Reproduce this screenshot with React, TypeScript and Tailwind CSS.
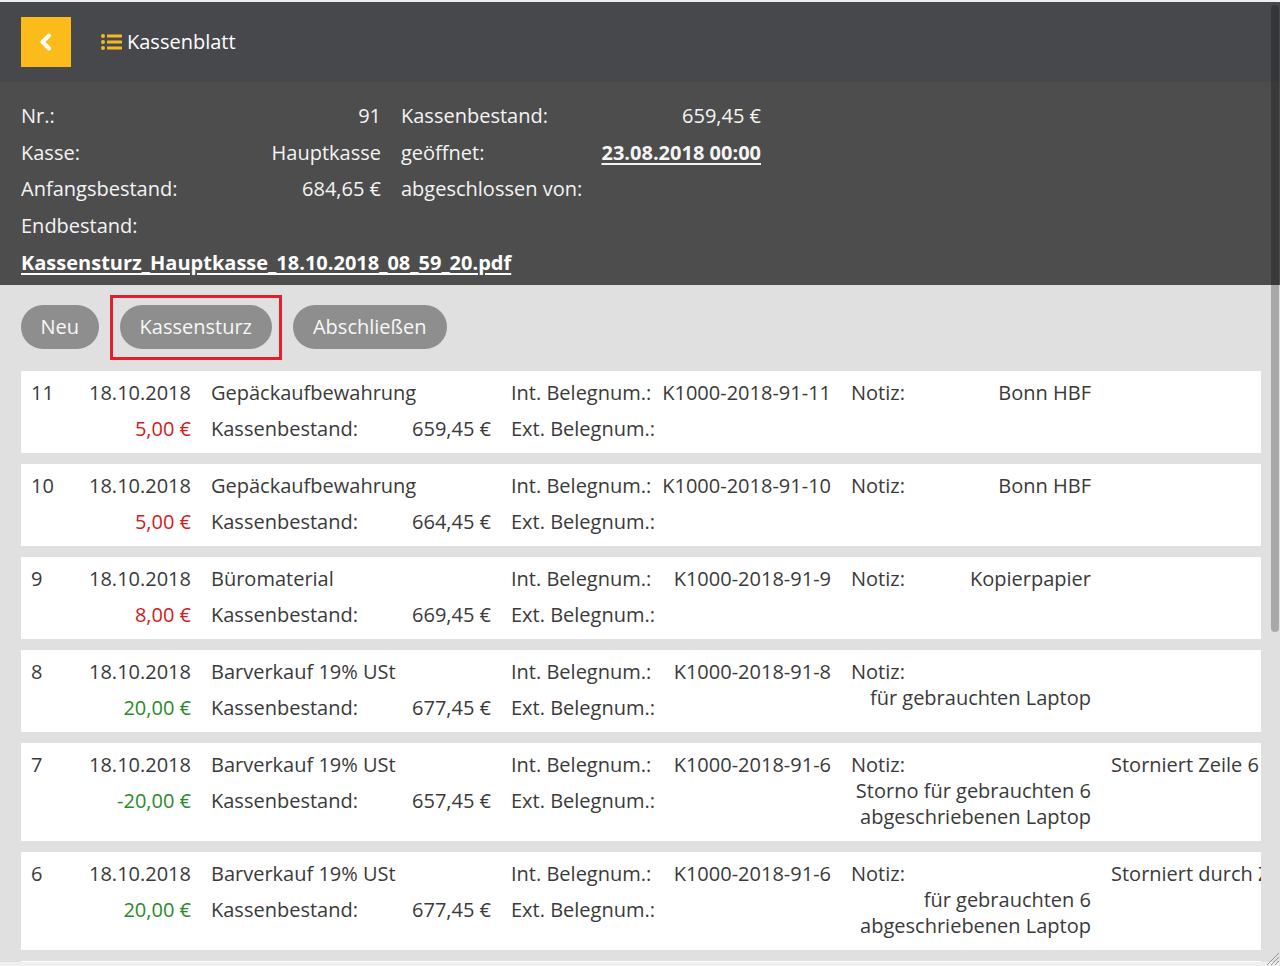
import React from "react";

type Row = {
  nr: string;
  date: string;
  desc: string;
  amount: string;
  amountColor: string;
  bestand: string;
  intNr: string;
  notiz: string[];
  notizInline?: boolean;
  extra?: string;
};

const rows: Row[] = [
  { nr: "11", date: "18.10.2018", desc: "Gepäckaufbewahrung", amount: "5,00 €", amountColor: "text-[#d01c1c]", bestand: "659,45 €", intNr: "K1000-2018-91-11", notiz: ["Bonn HBF"], notizInline: true },
  { nr: "10", date: "18.10.2018", desc: "Gepäckaufbewahrung", amount: "5,00 €", amountColor: "text-[#d01c1c]", bestand: "664,45 €", intNr: "K1000-2018-91-10", notiz: ["Bonn HBF"], notizInline: true },
  { nr: "9", date: "18.10.2018", desc: "Büromaterial", amount: "8,00 €", amountColor: "text-[#d01c1c]", bestand: "669,45 €", intNr: "K1000-2018-91-9", notiz: ["Kopierpapier"], notizInline: true },
  { nr: "8", date: "18.10.2018", desc: "Barverkauf 19% USt", amount: "20,00 €", amountColor: "text-[#2a8a2a]", bestand: "677,45 €", intNr: "K1000-2018-91-8", notiz: ["für gebrauchten Laptop"] },
  { nr: "7", date: "18.10.2018", desc: "Barverkauf 19% USt", amount: "-20,00 €", amountColor: "text-[#2a8a2a]", bestand: "657,45 €", intNr: "K1000-2018-91-6", notiz: ["Storno für gebrauchten 6", "abgeschriebenen Laptop"], extra: "Storniert Zeile 6" },
  { nr: "6", date: "18.10.2018", desc: "Barverkauf 19% USt", amount: "20,00 €", amountColor: "text-[#2a8a2a]", bestand: "677,45 €", intNr: "K1000-2018-91-6", notiz: ["für gebrauchten 6", "abgeschriebenen Laptop"], extra: "Storniert durch Zeile 7" },
];

function ListIcon() {
  return (
    <svg width="21" height="16" viewBox="0 0 21 16" fill="#f5b921">
      <circle cx="2" cy="2" r="2" />
      <circle cx="2" cy="8" r="2" />
      <circle cx="2" cy="14" r="2" />
      <rect x="6" y="0.5" width="15" height="3" rx="0.5" />
      <rect x="6" y="6.5" width="15" height="3" rx="0.5" />
      <rect x="6" y="12.5" width="15" height="3" rx="0.5" />
    </svg>
  );
}

function Card({ r }: { r: Row }) {
  return (
    <div className="bg-white flex items-start pt-[9px] pb-[11px] pl-[10px] gap-x-[20px] overflow-hidden leading-[26px] text-[#3a3a3a] whitespace-nowrap">
      <div className="grid grid-cols-[160px_280px_320px] gap-x-[20px] gap-y-[10px] shrink-0">
        <div className="flex justify-between">
          <span>{r.nr}</span>
          <span>{r.date}</span>
        </div>
        <div>{r.desc}</div>
        <div className="flex justify-between">
          <span>Int. Belegnum.:</span>
          <span>{r.intNr}</span>
        </div>
        <div className={`text-right ${r.amountColor}`}>{r.amount}</div>
        <div className="flex justify-between">
          <span>Kassenbestand:</span>
          <span>{r.bestand}</span>
        </div>
        <div>Ext. Belegnum.:</div>
      </div>
      <div className="w-[240px] shrink-0">
        {r.notizInline ? (
          <div className="flex justify-between">
            <span>Notiz:</span>
            <span>{r.notiz[0]}</span>
          </div>
        ) : (
          <>
            <div>Notiz:</div>
            {r.notiz.map((l, i) => (
              <div key={i} className="text-right">
                {l}
              </div>
            ))}
          </>
        )}
      </div>
      {r.extra && <div className="shrink-0">{r.extra}</div>}
    </div>
  );
}

function InfoPair({ label, value, bold }: { label: string; value?: string; bold?: boolean }) {
  return (
    <div className="w-[360px] flex justify-between items-center">
      <span>{label}</span>
      {value && <span className={bold ? "font-bold underline underline-offset-[3px]" : ""}>{value}</span>}
    </div>
  );
}

export default function App() {
  return (
    <div
      className="w-[1280px] h-[966px] bg-[#efefef] relative overflow-hidden pt-[2px]"
      style={{ fontFamily: "'Open Sans', 'Noto Sans', sans-serif" }}
    >
      <div className="h-[960px] overflow-hidden bg-[#e0e0e0] text-[20px]">
        {/* Header */}
        <div className="h-[80px] bg-[#47484c] flex items-center pl-[21px]">
          <button className="w-[50px] h-[50px] bg-[#fbbb1a] flex items-center justify-center">
            <svg width="14" height="18" viewBox="0 0 14 18">
              <polyline points="10,2.5 3.5,9 10,15.5" fill="none" stroke="white" strokeWidth="4" strokeLinecap="round" strokeLinejoin="round" />
            </svg>
          </button>
          <div className="ml-[30px] flex items-center gap-[5px] text-white">
            <ListIcon />
            <span className="leading-none">Kassenblatt</span>
          </div>
        </div>

        {/* Info */}
        <div className="bg-[#4d4d4d] text-[#f4f4f4] pl-[21px] pt-[16px] pb-[4px]">
          <div className="flex gap-x-[20px] h-[36.6px]">
            <InfoPair label="Nr.:" value="91" />
            <InfoPair label="Kassenbestand:" value="659,45 €" />
          </div>
          <div className="flex gap-x-[20px] h-[36.6px]">
            <InfoPair label="Kasse:" value="Hauptkasse" />
            <InfoPair label="geöffnet:" value="23.08.2018 00:00" bold />
          </div>
          <div className="flex gap-x-[20px] h-[36.6px]">
            <InfoPair label="Anfangsbestand:" value="684,65 €" />
            <InfoPair label="abgeschlossen von:" />
          </div>
          <div className="flex gap-x-[20px] h-[36.6px]">
            <InfoPair label="Endbestand:" />
          </div>
          <div className="flex items-center h-[36.6px]">
            <span className="font-bold underline underline-offset-[3px] text-white">
              Kassensturz_Hauptkasse_18.10.2018_08_59_20.pdf
            </span>
          </div>
        </div>

        {/* Buttons */}
        <div className="flex gap-x-[21px] pl-[21px] pt-[20px]">
          <button className="h-[44px] px-[19.5px] rounded-full bg-[#8e8e8e] text-[#f7f7f7]">Neu</button>
          <div className="relative">
            <button className="h-[44px] px-[20px] rounded-full bg-[#8e8e8e] text-[#f7f7f7]">Kassensturz</button>
            <span className="absolute left-[-10px] right-[-10px] top-[-10px] bottom-[-11px] border-[3px] border-[#e0202c] pointer-events-none" />
          </div>
          <button className="h-[44px] px-[20px] rounded-full bg-[#8e8e8e] text-[#f7f7f7]">Abschließen</button>
        </div>

        {/* Rows */}
        <div className="flex flex-col gap-y-[11px] pl-[21px] pr-[19px] pt-[22px]">
          {rows.map((r) => (
            <Card key={r.nr} r={r} />
          ))}
          <div className="bg-white h-[40px]" />
        </div>
      </div>

      {/* Scrollbar thumb */}
      <div className="absolute right-[1px] top-[5px] w-[8px] h-[627px] rounded-full bg-black/25" />

      {/* Resize grip */}
      <svg className="absolute right-0 bottom-0" width="16" height="16" viewBox="0 0 16 16">
        <line x1="15" y1="3" x2="3" y2="15" stroke="#9a9a9a" strokeWidth="1" />
        <line x1="15" y1="7" x2="7" y2="15" stroke="#9a9a9a" strokeWidth="1" />
        <line x1="15" y1="11" x2="11" y2="15" stroke="#9a9a9a" strokeWidth="1" />
      </svg>
    </div>
  );
}
